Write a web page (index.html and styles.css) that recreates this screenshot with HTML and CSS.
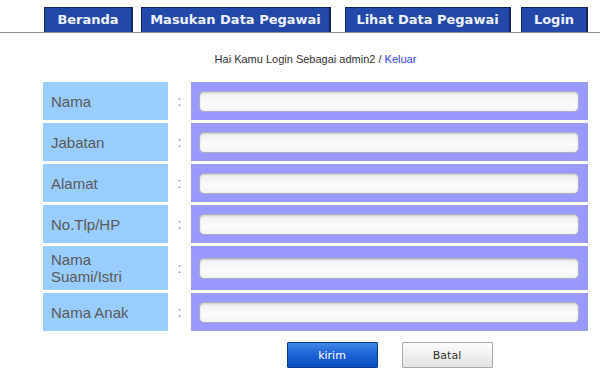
FILE: index.html
```html
<!DOCTYPE html>
<html>
<head>
<meta charset="utf-8">
<link rel="stylesheet" href="styles.css">
</head>
<body>
<div class="nav">
  <a class="tab tab-home">Beranda</a>
  <a class="tab tab-add">Masukan Data Pegawai</a>
  <a class="tab tab-list">Lihat Data Pegawai</a>
  <a class="tab tab-login">Login</a>
</div>
<div class="content">
  <p class="greeting">Hai Kamu Login Sebagai admin2 / <a class="logout">Keluar</a></p>
  <table class="form">
    <tr><td class="label">Nama</td><td class="colon">:</td><td class="field"><input class="input" type="text"></td></tr>
    <tr><td class="label">Jabatan</td><td class="colon">:</td><td class="field"><input class="input" type="text"></td></tr>
    <tr><td class="label">Alamat</td><td class="colon">:</td><td class="field"><input class="input" type="text"></td></tr>
    <tr><td class="label">No.Tlp/HP</td><td class="colon">:</td><td class="field"><input class="input" type="text"></td></tr>
    <tr><td class="label">Nama<br>Suami/Istri</td><td class="colon">:</td><td class="field"><input class="input" type="text"></td></tr>
    <tr><td class="label">Nama Anak</td><td class="colon">:</td><td class="field"><input class="input" type="text"></td></tr>
    <tr class="actions-row"><td></td><td></td><td class="actions"><button class="btn btn-send">kirim</button><button class="btn btn-cancel">Batal</button></td></tr>
  </table>
</div>
</body>
</html>
```
FILE: styles.css
```css
* { box-sizing: border-box; }
html, body { margin: 0; padding: 0; background: #fff; }
body { font-family: "Liberation Sans", Arial, sans-serif; }

.nav {
  display: flex;
  align-items: flex-end;
  height: 33px;
  padding-left: 44px;
  border-bottom: 1px solid #8a8a8a;
}
.tab {
  display: block;
  height: 25px;
  line-height: 24px;
  text-align: center;
  font-family: "DejaVu Sans", Verdana, sans-serif;
  font-weight: bold;
  font-size: 13px;
  color: #eef2ff;
  background: #2349a8;
  border: 1px solid #14245e;
  border-right-width: 2px;
  border-bottom: 0;
}
.tab-home { width: 89px; }
.tab-add { width: 190px; margin-left: 8px; }
.tab-list { width: 166px; margin-left: 14px; }
.tab-login { width: 67px; margin-left: 10px; }

.content { width: 551px; margin-left: 40px; }
.greeting {
  margin: 19px 0 13px;
  text-align: center;
  font-size: 11px;
  line-height: 14px;
  color: #333;
}
.logout { color: #3340e6; }

.form { border-spacing: 3px; width: 551px; }
.form td { padding: 0; }
.label {
  width: 125px;
  height: 38px;
  padding: 5px 8px !important;
  background: #99ccff;
  color: #595959;
  font-size: 15px;
  line-height: 17px;
  vertical-align: middle;
}
.colon {
  width: 17px;
  text-align: center;
  color: #888;
  font-size: 14px;
}
.field {
  background: #9999ff;
  padding: 0 9px 0 8px !important;
  vertical-align: middle;
}
.input {
  display: block;
  width: 100%;
  height: 21px;
  border: 1px solid #aeaec8;
  border-radius: 5px;
  background: linear-gradient(#f0f0f0, #fbfbfb 60%, #f4f4f4);
  box-shadow: inset 0 1px 2px rgba(0,0,0,0.15);
}
.actions {
  padding-top: 8px !important;
  text-align: center;
  white-space: nowrap;
}
.btn {
  width: 91px;
  height: 26px;
  font-family: "DejaVu Sans", Verdana, sans-serif;
  font-size: 11px;
  border-radius: 1px;
  vertical-align: top;
}
.btn-send {
  color: #fff;
  background: linear-gradient(#3f86e8, #1c62d6 50%, #0a4ec0);
  border: 1px solid #0b3a92;
  margin-right: 24px;
}
.btn-cancel {
  color: #333;
  background: linear-gradient(#fcfcfc, #f0f0f0 50%, #e2e2e2);
  border: 1px solid #a8a8a8;
}
```
